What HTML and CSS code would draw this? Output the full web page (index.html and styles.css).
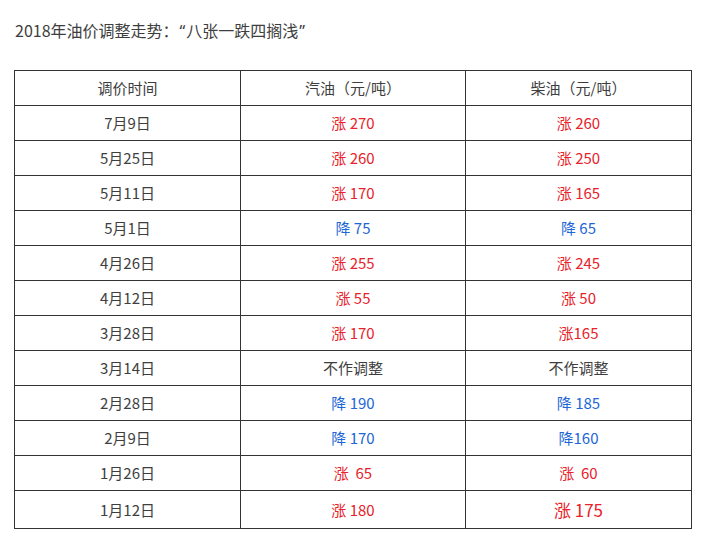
FILE: index.html
```html
<!DOCTYPE html>
<html lang="zh">
<head>
<meta charset="utf-8">
<link rel="stylesheet" href="styles.css">
</head>
<body>
<div class="page">
  <p class="title">2018年油价调整走势<span class="colon">：</span><span class="q">“</span>八张一跌四搁浅<span class="q">”</span></p>
  <table class="prices">
    <colgroup><col class="c1"><col class="c2"><col class="c3"></colgroup>
    <tr><td>调价时间</td><td>汽油（元/吨）</td><td>柴油（元/吨）</td></tr>
    <tr><td>7月9日</td><td class="up">涨 270</td><td class="up">涨 260</td></tr>
    <tr><td>5月25日</td><td class="up">涨 260</td><td class="up">涨 250</td></tr>
    <tr><td>5月11日</td><td class="up">涨 170</td><td class="up">涨 165</td></tr>
    <tr><td>5月1日</td><td class="down">降 75</td><td class="down">降 65</td></tr>
    <tr><td>4月26日</td><td class="up">涨 255</td><td class="up">涨 245</td></tr>
    <tr><td>4月12日</td><td class="up">涨 55</td><td class="up">涨 50</td></tr>
    <tr><td>3月28日</td><td class="up">涨 170</td><td class="up">涨165</td></tr>
    <tr><td>3月14日</td><td>不作调整</td><td>不作调整</td></tr>
    <tr><td>2月28日</td><td class="down">降 190</td><td class="down">降 185</td></tr>
    <tr><td>2月9日</td><td class="down">降 170</td><td class="down">降160</td></tr>
    <tr><td>1月26日</td><td class="up">涨&nbsp; 65</td><td class="up">涨&nbsp; 60</td></tr>
    <tr class="last"><td>1月12日</td><td class="up">涨 180</td><td class="up big">涨 175</td></tr>
  </table>
</div>
</body>
</html>
```
FILE: styles.css
```css
html, body {
  margin: 0;
  padding: 0;
  background: #fff;
}
body {
  font-family: "Noto Sans CJK SC", "Noto Sans", sans-serif;
  color: #3e3e3e;
  font-size: 15px;
}
.page {
  padding: 18px 0 0 14px;
}
.title {
  margin: 0 0 0 1px;
  font-size: 16px;
  line-height: 24px;
}
.title .colon {
  font-family: "Noto Sans CJK TC", sans-serif;
}
.title .q {
  font-family: "Noto Sans", sans-serif;
  padding: 0 1px;
}
.prices {
  margin-top: 27px;
  border-collapse: collapse;
  width: 677px;
  table-layout: fixed;
}
.c1 { width: 226px; }
.c2 { width: 225px; }
.c3 { width: 226px; }
.prices td {
  border: 1px solid #333;
  height: 34px;
  padding: 0;
  text-align: center;
  vertical-align: middle;
  line-height: 20px;
}
.prices .last td {
  height: 37px;
}
.up { color: #e8222a; }
.down { color: #2166d6; }
.big { font-size: 17px; }
```
